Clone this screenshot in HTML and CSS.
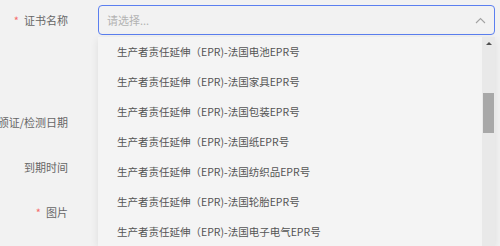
FILE: index.html
```html
<!DOCTYPE html>
<html lang="zh-CN">
<head>
<meta charset="utf-8">
<title>证书</title>
<link rel="stylesheet" href="styles.css">
</head>
<body>
<div class="form">
  <div class="item">
    <div class="label"><span class="req">*</span>证书名称</div>
    <div class="control">
      <div class="select">
        <span class="placeholder">请选择...</span>
        <svg class="chev" width="11" height="7" viewBox="0 0 11 7"><path d="M1 6 L5.5 1.5 L10 6" fill="none" stroke="#a3a3a3" stroke-width="1.1"/></svg>
      </div>
    </div>
  </div>
  <div class="item spacer"></div>
  <div class="item">
    <div class="label">颁证/检测日期</div>
    <div class="control"></div>
  </div>
  <div class="item">
    <div class="label">到期时间</div>
    <div class="control"></div>
  </div>
  <div class="item">
    <div class="label"><span class="req">*</span>图片</div>
    <div class="control"></div>
  </div>
</div>

<div class="dropdown">
  <ul class="options">
    <li>生产者责任延伸（EPR)-法国电池EPR号</li>
    <li>生产者责任延伸（EPR)-法国家具EPR号</li>
    <li>生产者责任延伸（EPR)-法国包装EPR号</li>
    <li>生产者责任延伸（EPR)-法国纸EPR号</li>
    <li>生产者责任延伸（EPR)-法国纺织品EPR号</li>
    <li>生产者责任延伸（EPR)-法国轮胎EPR号</li>
    <li>生产者责任延伸（EPR)-法国电子电气EPR号</li>
  </ul>
  <div class="scrollbar">
    <div class="arrow-up"></div>
    <div class="thumb"></div>
  </div>
</div>
</body>
</html>
```
FILE: styles.css
```css
html, body {
  margin: 0;
  padding: 0;
  background: #f2f2f2;
  font-family: "Noto Sans CJK SC", "Noto Sans", sans-serif;
  overflow: hidden;
}

.form {
  padding: 5px 5px 0 0;
}

.item {
  display: flex;
  height: 30px;
  margin-bottom: 15px;
  gap: 30px;
}

.item.spacer {
  height: 42px;
}

.label {
  width: 68px;
  flex: none;
  display: flex;
  justify-content: flex-end;
  align-items: center;
  white-space: nowrap;
  font-size: 11px;
  color: #666;
}

.req {
  color: #f56c6c;
  margin-right: 5px;
  font-size: 11px;
}

.control {
  flex: 1;
}

.select {
  box-sizing: border-box;
  height: 30px;
  border: 1px solid #5b7ff0;
  border-radius: 4px;
  display: flex;
  align-items: center;
  justify-content: space-between;
  padding: 0 8px 0 8px;
  background: #f2f2f2;
}

.placeholder {
  font-size: 11px;
  color: #b3b3b3;
}

.chev {
  display: block;
  margin-top: 1px;
}

.dropdown {
  position: absolute;
  left: 98px;
  top: 37px;
  right: 5px;
  bottom: 0;
  display: flex;
  background: #f4f4f4;
  box-shadow: 0 2px 8px rgba(0, 0, 0, 0.09);
  overflow: hidden;
}

.options {
  flex: 1;
  list-style: none;
  margin: 0;
  padding: 0 0 0 19px;
}

.options li {
  height: 30px;
  line-height: 30px;
  font-size: 10.5px;
  color: #555;
  white-space: nowrap;
}

.scrollbar {
  width: 13px;
  flex: none;
  background: #e9e9e9;
  display: flex;
  flex-direction: column;
  align-items: center;
}

.arrow-up {
  width: 0;
  height: 0;
  margin-top: 5px;
  border-left: 3px solid transparent;
  border-right: 3px solid transparent;
  border-bottom: 3px solid #505050;
}

.thumb {
  width: 11px;
  height: 40px;
  margin-top: 48px;
  background: #a8a8a8;
}
```
